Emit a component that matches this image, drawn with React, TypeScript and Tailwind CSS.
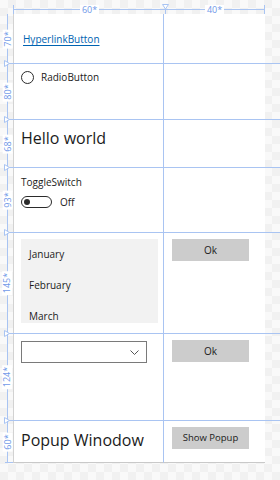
import React from "react";

const line = "#a9c4f2";

function RowMarker() {
    return (
        <svg className="absolute -bottom-[3.5px] -left-[1px]" width="6" height="7" viewBox="0 0 6 7">
            <path d="M0.5 0.5 L5.5 3.5 L0.5 6.5 Z" fill="white" stroke={line} strokeWidth="1" />
        </svg>
    );
}

function Ruler({ label, last }: { label: string; last?: boolean }) {
    return (
        <div className={`relative flex w-[8px] shrink-0 ${last ? "border-b border-[#a9c4f2]" : ""}`}>
            <div className="flex h-full w-[5px] items-center justify-center bg-[linear-gradient(#a9c4f2,#a9c4f2)] bg-[length:1px_100%] bg-center bg-no-repeat">
                <span className="-rotate-90 whitespace-nowrap bg-white px-[2px] text-[9px] leading-[10px] text-[#6f98e8]">
                    {label}
                </span>
            </div>
            {!last && <RowMarker />}
        </div>
    );
}

function Row({
    h,
    label,
    last,
    left,
    right,
}: {
    h: string;
    label: string;
    last?: boolean;
    left: React.ReactNode;
    right?: React.ReactNode;
}) {
    return (
        <div className={`flex ${h} ${last ? "" : "border-b border-[#a9c4f2]"}`}>
            <Ruler label={label} last={last} />
            <div
                className={`w-[151px] shrink-0 border-l border-r border-l-[#d2d2d2] border-r-[#a9c4f2] bg-white ${
                    last ? "border-b border-b-[#c9c9c9]" : ""
                }`}
            >
                {left}
            </div>
            <div className={`w-[101px] shrink-0 bg-white ${last ? "border-b border-b-[#c9c9c9]" : ""}`}>{right}</div>
        </div>
    );
}

function GrayButton({ text, small }: { text: string; small?: boolean }) {
    return (
        <div className="pl-[8px] pt-[6px]">
            <div
                className={`flex h-[22px] w-[77px] items-center justify-center bg-[#cccccc] text-[#1b1b1b] ${
                    small ? "text-[9.5px]" : "text-[10px]"
                }`}
            >
                {text}
            </div>
        </div>
    );
}

export default function App() {
    return (
        <div className="h-[480px] w-[280px] overflow-hidden bg-[conic-gradient(#f1f1f1_25%,#f9f9f9_0_50%,#f1f1f1_0_75%,#f9f9f9_0)] bg-[length:16px_16px] font-['Segoe_UI','Open_Sans',sans-serif] text-[#1b1b1b]">
            {/* top ruler */}
            <div className="flex h-[14px]">
                <div className="w-[13px] shrink-0" />
                <div className="mt-[5px] flex h-[9px] w-[252px] border-x border-[#a9c4f2] bg-[linear-gradient(#a9c4f2,#a9c4f2)] bg-[length:100%_1px] bg-[position:0_4px] bg-no-repeat">
                    <div className="relative flex w-[151px] items-center justify-center">
                        <span className="bg-white px-[2px] text-[9px] leading-[10px] text-[#6f98e8]">60*</span>
                        <svg className="absolute -right-[4px] -top-[1px]" width="7" height="10" viewBox="0 0 7 10">
                            <path d="M0.5 0.5 L6.5 0.5 L3.5 5 Z" fill="white" stroke={line} strokeWidth="1" />
                            <path d="M3.5 5 L3.5 10" stroke={line} strokeWidth="1" />
                        </svg>
                    </div>
                    <div className="flex flex-1 items-center justify-center">
                        <span className="bg-white px-[2px] text-[9px] leading-[10px] text-[#6f98e8]">40*</span>
                    </div>
                </div>
            </div>

            {/* design surface */}
            <div className="pl-[5px]">
                <Row
                    h="h-[50px]"
                    label="70*"
                    left={
                        <div className="flex h-full items-center pl-[9px] pt-[2px]">
                            <span className="text-[10px] text-[#0063b1] underline underline-offset-[1.5px]">HyperlinkButton</span>
                        </div>
                    }
                />
                <Row
                    h="h-[56px]"
                    label="80*"
                    left={
                        <div className="flex items-center pl-[7px] pt-[7px]">
                            <div className="size-[13px] rounded-full border-[1.5px] border-[#2b2b2b]" />
                            <span className="ml-[7px] text-[10px] leading-[13px]">RadioButton</span>
                        </div>
                    }
                />
                <Row
                    h="h-[48px]"
                    label="68*"
                    left={<div className="pl-[7px] pt-[9px] text-[16px] leading-[18px]">Hello world</div>}
                />
                <Row
                    h="h-[65px]"
                    label="93*"
                    left={
                        <div className="pl-[7px] pt-[7px]">
                            <div className="text-[10px] leading-[14px]">ToggleSwitch</div>
                            <div className="mt-[7px] flex items-center">
                                <div className="flex h-[12px] w-[31px] items-center rounded-full border-[1.5px] border-[#2b2b2b]">
                                    <div className="ml-[2px] size-[6px] rounded-full bg-[#2b2b2b]" />
                                </div>
                                <span className="ml-[8px] text-[10px] leading-[12px]">Off</span>
                            </div>
                        </div>
                    }
                />
                <Row
                    h="h-[101px]"
                    label="145*"
                    left={
                        <div className="pl-[7px] pt-[6px]">
                            <div className="h-[84px] w-[137px] overflow-hidden bg-[#f2f2f2] text-[10px]">
                                {["January", "February", "March"].map((m) => (
                                    <div key={m} className="flex h-[31px] items-center pl-[8px]">
                                        {m}
                                    </div>
                                ))}
                            </div>
                        </div>
                    }
                    right={<GrayButton text="Ok" />}
                />
                <Row
                    h="h-[87px]"
                    label="124*"
                    left={
                        <div className="pl-[7px] pt-[7px]">
                            <div className="flex h-[22px] w-[126px] items-center justify-end border-[1.5px] border-[#7a7a7a] bg-white pr-[7px]">
                                <svg width="9" height="5" viewBox="0 0 9 5">
                                    <path d="M0.5 0.5 L4.5 4.5 L8.5 0.5" fill="none" stroke="#555" strokeWidth="1" />
                                </svg>
                            </div>
                        </div>
                    }
                    right={<GrayButton text="Ok" />}
                />
                <Row
                    h="h-[42px]"
                    label="60*"
                    last
                    left={<div className="pl-[7px] pt-[10px] text-[16px] leading-[18px]">Popup Winodow</div>}
                    right={<GrayButton text="Show Popup" small />}
                />
            </div>
        </div>
    );
}
